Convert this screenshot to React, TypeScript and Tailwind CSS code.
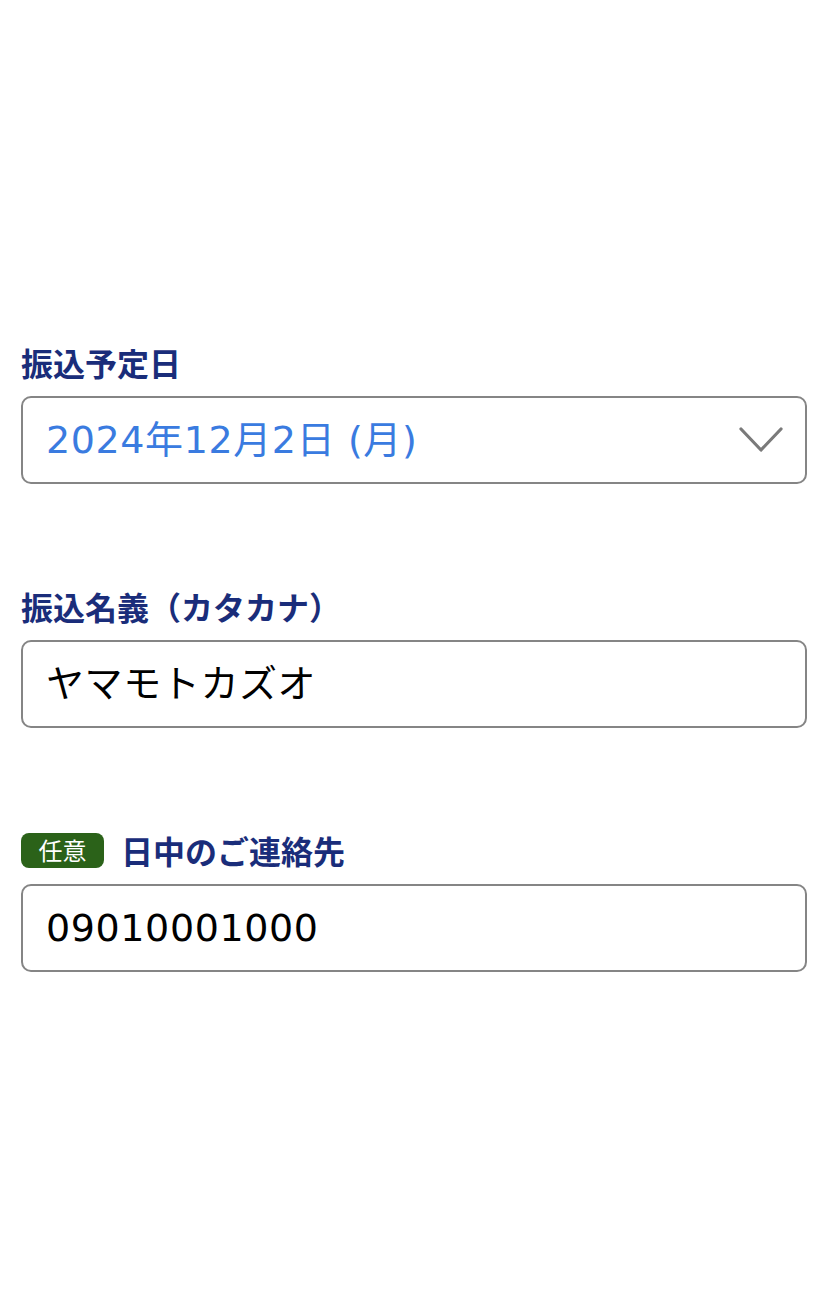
const jp = "font-['Noto_Sans_CJK_JP',sans-serif]";
const val = "font-['DejaVu_Sans','Noto_Sans_CJK_JP',sans-serif]";

//* field label
const FieldLabel: React.FC<{ title: string; optional?: boolean }> = ({
  title,
  optional,
}) => {
  return (
    <div className="flex items-center h-[38px]">
      {optional && (
        <span className="mr-[17px] flex items-center justify-center h-[35px] w-[83px] rounded-[8px] bg-[#2b6219] text-white text-[24px] leading-none">
          任意
        </span>
      )}
      <p className="text-[#1a2d7a] text-[32px] font-bold leading-none">
        {title}
      </p>
    </div>
  );
};

//* input box
const FieldBox: React.FC<{ value: string; select?: boolean }> = ({
  value,
  select,
}) => {
  return (
    <div className="mt-[15px] h-[88px] rounded-[10px] border-2 border-[#858585] bg-white flex items-center justify-between pl-[23px] pr-[22px]">
      <span
        className={`${val} text-[38px] leading-none tracking-[0.6px] ${
          select ? "text-[#3a7be0]" : "text-black"
        }`}
      >
        {value}
      </span>
      {select && (
        <svg width="44" height="26" viewBox="0 0 44 26" fill="none">
          <polyline
            points="2,2 22,23 42,2"
            stroke="#7a7a7a"
            strokeWidth="3.2"
            strokeLinecap="round"
            strokeLinejoin="round"
          />
        </svg>
      )}
    </div>
  );
};

export default function App() {
  return (
    <div className={`${jp} bg-white w-[828px] h-[1300px] pt-[343px] px-[21px]`}>
      <div className="flex flex-col gap-[103px]">
        <div>
          <FieldLabel title="振込予定日" />
          <FieldBox value="2024年12月2日 (月)" select />
        </div>
        <div>
          <FieldLabel title="振込名義（カタカナ）" />
          <FieldBox value="ヤマモトカズオ" />
        </div>
        <div>
          <FieldLabel title="日中のご連絡先" optional />
          <FieldBox value="09010001000" />
        </div>
      </div>
    </div>
  );
}
